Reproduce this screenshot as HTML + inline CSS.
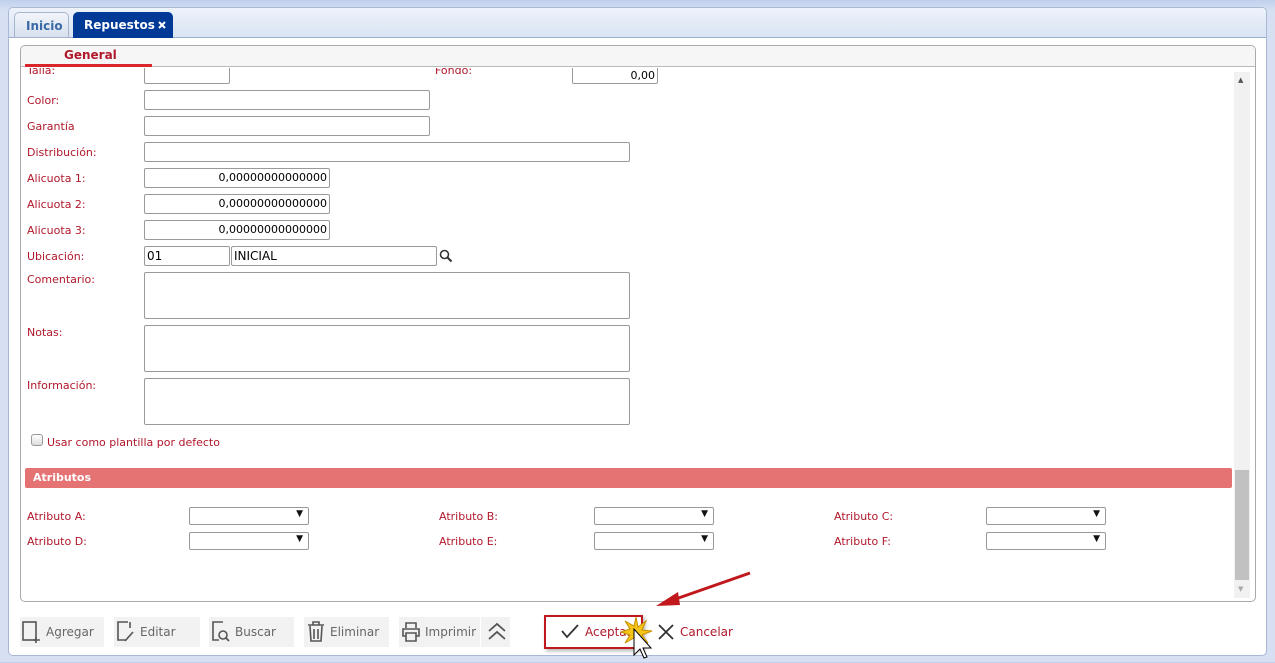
<!DOCTYPE html>
<html><head><meta charset="utf-8"><style>
*{box-sizing:border-box;margin:0;padding:0}
body{width:1275px;height:662px;background:linear-gradient(#c0cfec,#d6e0f2 10px,#d6e0f2);font-family:"DejaVu Sans","Liberation Sans",sans-serif;font-size:11px;position:relative;overflow:hidden}
.a{position:absolute}
.outer{left:8px;top:7px;width:1259px;height:649px;background:#fff;border:1px solid #a9b8d4;border-radius:5px}
.tabbar{left:9px;top:8px;width:1257px;height:30px;background:linear-gradient(#eef3fb,#d9e3f3);border-bottom:1px solid #9fb0cc;border-radius:5px 5px 0 0}
.tab{top:12px;height:26px;border-radius:5px 5px 0 0;font-weight:bold;font-size:12px;line-height:26px;padding-left:11px}
.panel{left:20px;top:45px;width:1236px;height:557px;border:1px solid #aaa;border-radius:5px;background:#fff}
.lbl{color:#b0182b;left:27px}
.in{border:1px solid #9a9a9a;border-radius:2px;height:20px;background:#fff;font-size:11px;line-height:18px;padding:0 2px}
.r{text-align:right}
.sel{border:1px solid #999;border-radius:2px;height:18px;width:120px;background:#fff}
.sel:after{content:"▼";position:absolute;right:5px;top:1px;font-size:9px;color:#111}
.btn{top:617px;height:30px;background:#f2f2f2;color:#666;font-size:12px;line-height:30px;padding-left:26px}
</style></head><body>
<div class="a outer"></div>
<div class="a tabbar"></div>
<div class="a tab" style="left:14px;width:55px;background:linear-gradient(#f2f5fa,#d7e0ee);border:1px solid #a6b4cc;color:#3a6aa5">Inicio</div>
<div class="a tab" style="left:73px;width:100px;background:#003a96;color:#fff">Repuestos</div>
<svg class="a" style="left:158px;top:21px" width="8" height="8"><path d="M1 1l6 6M7 1L1 7" stroke="#fff" stroke-width="2"/></svg>
<div class="a panel"></div>
<div class="a" style="left:21px;top:46px;width:1234px;height:21px;background:#f6f6f6;border-bottom:1px solid #bbb;border-radius:5px 5px 0 0"></div>
<div class="a" style="left:64px;top:48px;color:#b0182b;font-weight:bold;font-size:12px">General</div>
<div class="a" style="left:25px;top:64px;width:127px;height:3px;background:#d8262a"></div>
<div class="a" style="left:21px;top:68px;width:1212px;height:530px;overflow:hidden">
 <div class="a lbl" style="left:6px;top:-4px">Talla:</div>
 <div class="a in" style="left:123px;top:-8px;width:86px;height:24px"></div>
 <div class="a lbl" style="left:414px;top:-4px">Fondo:</div>
 <div class="a in r" style="left:551px;top:-6px;width:86px;height:22px;padding-top:4px">0,00</div>
</div>
<div class="a lbl" style="top:94px">Color:</div><div class="a in" style="left:144px;top:90px;width:286px"></div>
<div class="a lbl" style="top:120px">Garantía</div><div class="a in" style="left:144px;top:116px;width:286px"></div>
<div class="a lbl" style="top:146px">Distribución:</div><div class="a in" style="left:144px;top:142px;width:486px"></div>
<div class="a lbl" style="top:172px">Alicuota 1:</div><div class="a in r" style="left:144px;top:168px;width:186px">0,00000000000000</div>
<div class="a lbl" style="top:198px">Alicuota 2:</div><div class="a in r" style="left:144px;top:194px;width:186px">0,00000000000000</div>
<div class="a lbl" style="top:224px">Alicuota 3:</div><div class="a in r" style="left:144px;top:220px;width:186px">0,00000000000000</div>
<div class="a lbl" style="top:250px">Ubicación:</div>
<div class="a in" style="left:144px;top:246px;width:86px;font-size:12px">01</div>
<div class="a in" style="left:231px;top:246px;width:206px;font-size:12px">INICIAL</div>
<svg class="a" style="left:439px;top:249px" width="14" height="14"><circle cx="5.5" cy="5.5" r="4" fill="none" stroke="#333" stroke-width="1.6"/><path d="M8.5 8.5l4 4" stroke="#333" stroke-width="2"/></svg>
<div class="a lbl" style="top:273px">Comentario:</div><div class="a in" style="left:144px;top:272px;width:486px;height:47px"></div>
<div class="a lbl" style="top:326px">Notas:</div><div class="a in" style="left:144px;top:325px;width:486px;height:47px"></div>
<div class="a lbl" style="top:379px">Información:</div><div class="a in" style="left:144px;top:378px;width:486px;height:47px"></div>
<div class="a" style="left:31px;top:434px;width:12px;height:12px;border:1px solid #999;border-radius:3px;background:linear-gradient(#fff,#ddd)"></div>
<div class="a lbl" style="left:47px;top:436px">Usar como plantilla por defecto</div>
<div class="a" style="left:25px;top:468px;width:1207px;height:20px;background:#e57373;border-radius:2px;color:#fff;font-weight:bold;padding-left:8px;line-height:20px">Atributos</div>
<div class="a lbl" style="top:510px">Atributo A:</div><div class="a sel" style="left:189px;top:507px"></div>
<div class="a lbl" style="left:439px;top:510px">Atributo B:</div><div class="a sel" style="left:594px;top:507px"></div>
<div class="a lbl" style="left:834px;top:510px">Atributo C:</div><div class="a sel" style="left:986px;top:507px"></div>
<div class="a lbl" style="top:535px">Atributo D:</div><div class="a sel" style="left:189px;top:532px"></div>
<div class="a lbl" style="left:439px;top:535px">Atributo E:</div><div class="a sel" style="left:594px;top:532px"></div>
<div class="a lbl" style="left:834px;top:535px">Atributo F:</div><div class="a sel" style="left:986px;top:532px"></div>
<div class="a" style="left:1234px;top:72px;width:16px;height:526px;background:#f1f1f1"></div>
<div class="a" style="left:1235px;top:470px;width:14px;height:110px;background:#c1c1c1"></div>
<div class="a" style="left:1238px;top:76px;font-size:7px;color:#555">▲</div>
<div class="a" style="left:1238px;top:585px;font-size:7px;color:#aaa">▼</div>
<div class="a btn" style="left:20px;width:84px">Agregar</div>
<svg class="a" style="left:22px;top:621px" width="20" height="22"><rect x="1" y="1" width="13" height="18" fill="none" stroke="#555" stroke-width="1.6"/><path d="M14 16v6M11 19h7" stroke="#555" stroke-width="1.6"/></svg>
<div class="a btn" style="left:114px;width:86px">Editar</div>
<svg class="a" style="left:116px;top:621px" width="20" height="22"><path d="M12 1H2v18h8M14 1v6M9 20l8-9" fill="none" stroke="#555" stroke-width="1.6"/></svg>
<div class="a btn" style="left:209px;width:85px">Buscar</div>
<svg class="a" style="left:211px;top:621px" width="22" height="22"><path d="M12 1H2v18h6" fill="none" stroke="#555" stroke-width="1.6"/><circle cx="12" cy="14" r="4" fill="none" stroke="#555" stroke-width="1.6"/><path d="M15 17l3 3" stroke="#555" stroke-width="1.8"/></svg>
<div class="a btn" style="left:304px;width:85px">Eliminar</div>
<svg class="a" style="left:307px;top:621px" width="18" height="22"><path d="M1 4h16M6 4V1h6v3M3 5l1 15h10l1-15M7 8v10M11 8v10" fill="none" stroke="#555" stroke-width="1.6"/></svg>
<div class="a btn" style="left:399px;width:81px">Imprimir</div>
<svg class="a" style="left:401px;top:621px" width="20" height="22"><path d="M5 7V2h10v5M5 15H2V8h16v7h-3M5 12h10v8H5z" fill="none" stroke="#555" stroke-width="1.6"/></svg>
<div class="a" style="left:481px;top:617px;width:29px;height:30px;background:#f2f2f2"></div>
<svg class="a" style="left:486px;top:622px" width="22" height="20"><path d="M3 9l8-7 8 7M3 17l8-7 8 7" fill="none" stroke="#555" stroke-width="1.8"/></svg>
<div class="a" style="left:544px;top:615px;width:99px;height:34px;border:2px solid #c0181c;box-shadow:2px 2px 4px rgba(0,0,0,.3)"></div>
<svg class="a" style="left:561px;top:623px" width="18" height="16"><path d="M1 8l5 6L17 2" fill="none" stroke="#333" stroke-width="1.8"/></svg>
<div class="a" style="left:585px;top:625px;color:#b0182b;font-size:12px">Aceptar</div>
<svg class="a" style="left:620px;top:615px" width="40" height="48"><path d="M16 2l2 10 8-6-4 9 10 1-10 4 6 8-9-5-3 10-2-10-9 5 5-8-9-3 9-3-5-8 9 5z" fill="#f5c518" stroke="#c89000"/><path d="M14 14v26l6-6 4 9 3-1-4-9h8z" fill="#fff" stroke="#000"/></svg>
<svg class="a" style="left:657px;top:623px" width="18" height="18"><path d="M2 2l14 14M16 2L2 16" stroke="#333" stroke-width="1.8"/></svg>
<div class="a" style="left:680px;top:625px;color:#b0182b;font-size:12px">Cancelar</div>
<svg class="a" style="left:650px;top:568px" width="110" height="45"><path d="M100 5L20 33" stroke="#c0181c" stroke-width="3"/><path d="M6 38l22-14 2 13z" fill="#c0181c"/></svg>
</body></html>
